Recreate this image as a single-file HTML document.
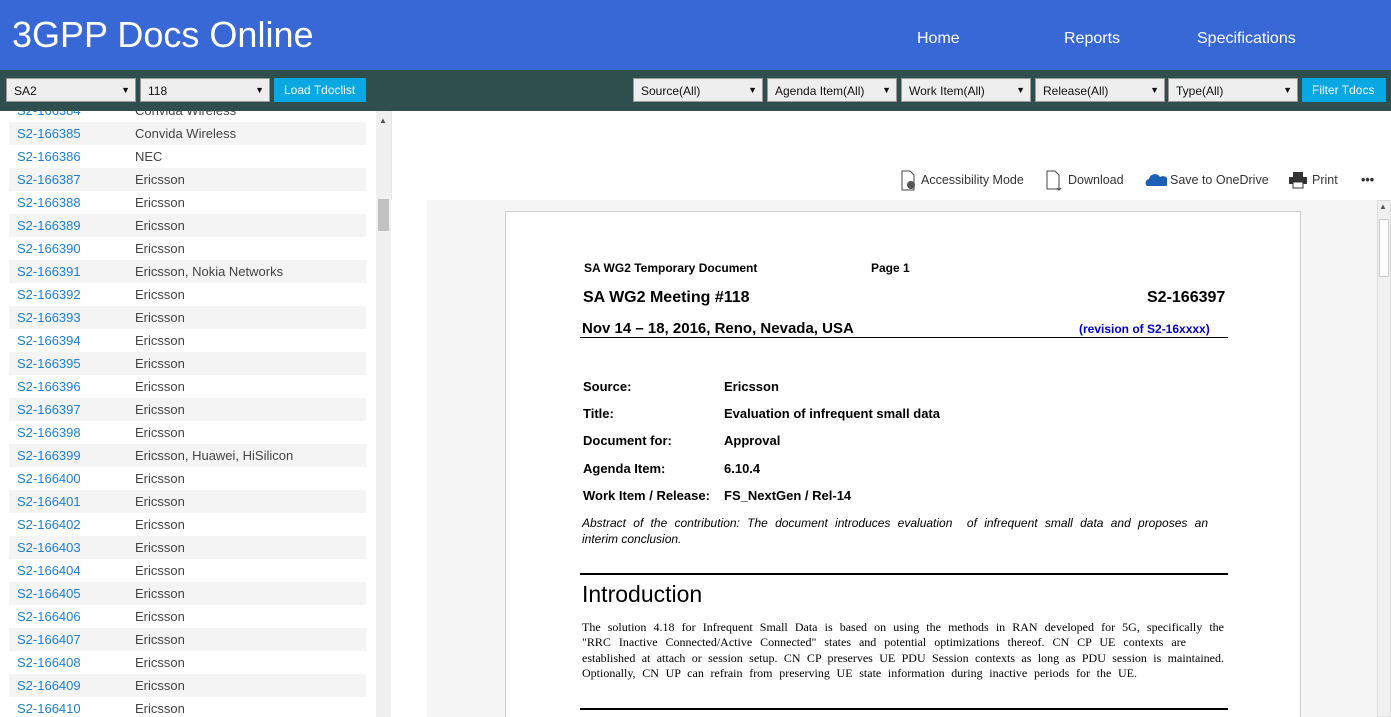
<!DOCTYPE html><html><head><style>
*{margin:0;padding:0;box-sizing:border-box}
html,body{width:1391px;height:717px;overflow:hidden}
body{font-family:"Liberation Sans",sans-serif;background:#fff;position:relative}
.hd{position:absolute;left:0;top:0;width:1391px;height:70px;background:#3867d6}
.hd h1{position:absolute;left:12px;top:14px;font-weight:normal;font-size:36px;color:#fff}
.nav{position:absolute;top:30px;color:#fff;font-size:16px}
.tb{position:absolute;left:0;top:70px;width:1391px;height:41px;background:#2f4f4f}
.sel{position:absolute;top:8px;height:24px;background:#eee;border:1px solid #999;font-size:12px;padding:5px 7px;color:#111}
.sel:after{content:"▼";position:absolute;right:5px;top:6px;font-size:9px}
.btn{position:absolute;top:8px;height:24px;background:#09a8e3;color:#fff;font-size:12px;padding:5px 10px}
.list{position:absolute;left:0;top:111px;width:376px;height:606px;overflow:hidden}
.row{position:absolute;left:9px;width:357px;height:23px;font-size:13px;line-height:23px}
.row .a{position:absolute;left:8px;color:#1a7fd6}.row .b{position:absolute;left:126px;color:#444}
.g{background:#f4f4f4}
.sb{position:absolute;left:376px;top:111px;width:15px;height:606px;background:#f0f0f0}
.doc{position:absolute;left:427px;top:200px;width:950px;height:517px;background:#f5f5f5}
.page{position:absolute;left:505px;top:211px;width:796px;height:506px;background:#fff;border:1px solid #ccc;border-bottom:none}
.t{position:absolute;font-size:13px;color:#000;white-space:nowrap}
.tl{position:absolute;top:173px;font-size:12.5px;color:#333}
.pl{position:absolute;left:582px;width:642px;font-family:'Liberation Serif',serif;font-size:12px;white-space:nowrap;text-align:justify;text-align-last:justify}
</style></head><body>
<div class="hd"><h1>3GPP Docs Online</h1><span class="nav" style="left:917px">Home</span><span class="nav" style="left:1064px">Reports</span><span class="nav" style="left:1197px">Specifications</span></div>
<div class="tb">
<div class="sel" style="left:6px;width:130px">SA2</div><div class="sel" style="left:140px;width:130px">118</div><div class="btn" style="left:274px;width:92px">Load Tdoclist</div>
<div class="sel" style="left:633px;width:130px">Source(All)</div><div class="sel" style="left:767px;width:130px">Agenda Item(All)</div><div class="sel" style="left:901px;width:130px">Work Item(All)</div><div class="sel" style="left:1035px;width:130px">Release(All)</div><div class="sel" style="left:1168px;width:130px">Type(All)</div><div class="btn" style="left:1302px;width:84px">Filter Tdocs</div>
</div>
<div class="list">
<div class="row" style="top:-12px"><span class="a">S2-166384</span><span class="b">Convida Wireless</span></div>
<div class="row g" style="top:11px"><span class="a">S2-166385</span><span class="b">Convida Wireless</span></div>
<div class="row" style="top:34px"><span class="a">S2-166386</span><span class="b">NEC</span></div>
<div class="row g" style="top:57px"><span class="a">S2-166387</span><span class="b">Ericsson</span></div>
<div class="row" style="top:80px"><span class="a">S2-166388</span><span class="b">Ericsson</span></div>
<div class="row g" style="top:103px"><span class="a">S2-166389</span><span class="b">Ericsson</span></div>
<div class="row" style="top:126px"><span class="a">S2-166390</span><span class="b">Ericsson</span></div>
<div class="row g" style="top:149px"><span class="a">S2-166391</span><span class="b">Ericsson, Nokia Networks</span></div>
<div class="row" style="top:172px"><span class="a">S2-166392</span><span class="b">Ericsson</span></div>
<div class="row g" style="top:195px"><span class="a">S2-166393</span><span class="b">Ericsson</span></div>
<div class="row" style="top:218px"><span class="a">S2-166394</span><span class="b">Ericsson</span></div>
<div class="row g" style="top:241px"><span class="a">S2-166395</span><span class="b">Ericsson</span></div>
<div class="row" style="top:264px"><span class="a">S2-166396</span><span class="b">Ericsson</span></div>
<div class="row g" style="top:287px"><span class="a">S2-166397</span><span class="b">Ericsson</span></div>
<div class="row" style="top:310px"><span class="a">S2-166398</span><span class="b">Ericsson</span></div>
<div class="row g" style="top:333px"><span class="a">S2-166399</span><span class="b">Ericsson, Huawei, HiSilicon</span></div>
<div class="row" style="top:356px"><span class="a">S2-166400</span><span class="b">Ericsson</span></div>
<div class="row g" style="top:379px"><span class="a">S2-166401</span><span class="b">Ericsson</span></div>
<div class="row" style="top:402px"><span class="a">S2-166402</span><span class="b">Ericsson</span></div>
<div class="row g" style="top:425px"><span class="a">S2-166403</span><span class="b">Ericsson</span></div>
<div class="row" style="top:448px"><span class="a">S2-166404</span><span class="b">Ericsson</span></div>
<div class="row g" style="top:471px"><span class="a">S2-166405</span><span class="b">Ericsson</span></div>
<div class="row" style="top:494px"><span class="a">S2-166406</span><span class="b">Ericsson</span></div>
<div class="row g" style="top:517px"><span class="a">S2-166407</span><span class="b">Ericsson</span></div>
<div class="row" style="top:540px"><span class="a">S2-166408</span><span class="b">Ericsson</span></div>
<div class="row g" style="top:563px"><span class="a">S2-166409</span><span class="b">Ericsson</span></div>
<div class="row" style="top:586px"><span class="a">S2-166410</span><span class="b">Ericsson</span></div>
</div>
<div class="sb"><div style="position:absolute;left:3px;top:5px;font-size:8px;color:#555">▲</div><div style="position:absolute;left:2px;top:88px;width:11px;height:32px;background:#c1c1c1"></div></div>
<div style="position:absolute;left:391px;top:111px;width:1000px;height:89px;background:#fff;border-left:1px solid #e5e5e5"></div>
<svg style="position:absolute;left:900px;top:170px" width="18" height="22" viewBox="0 0 18 22"><path d="M2 1h8l4 4v15H2z" fill="none" stroke="#444"/><circle cx="11" cy="15" r="4" fill="#555"/></svg>
<div class="tl" style="left:921px">Accessibility Mode</div>
<svg style="position:absolute;left:1046px;top:170px" width="18" height="22" viewBox="0 0 18 22"><path d="M1 1h8l4 4v14H1z" fill="none" stroke="#444"/><path d="M13 13v7M11 18l2 2 2-2" fill="none" stroke="#444"/></svg>
<div class="tl" style="left:1068px">Download</div>
<svg style="position:absolute;left:1145px;top:172px" width="22" height="16" viewBox="0 0 22 16"><path d="M2 14a4 4 0 0 1 2-7a6 6 0 0 1 11-2a5 5 0 0 1 6 9z" fill="#1c5fb8"/></svg>
<div class="tl" style="left:1170px">Save to OneDrive</div>
<svg style="position:absolute;left:1288px;top:171px" width="20" height="18" viewBox="0 0 20 18"><rect x="5" y="1" width="10" height="5" fill="#333"/><rect x="1" y="6" width="18" height="7" fill="#333"/><rect x="5" y="11" width="10" height="6" fill="#fff" stroke="#333"/></svg>
<div class="tl" style="left:1312px">Print</div>
<div class="tl" style="left:1361px;font-weight:bold">•••</div>
<div class="doc"></div>
<div style="position:absolute;left:1377px;top:200px;width:14px;height:517px;background:#f0f0f0;border:1px solid #ddd"><div style="position:absolute;left:1px;top:1px;font-size:8px;color:#555">▲</div><div style="position:absolute;left:1px;top:18px;width:10px;height:58px;background:#fff;border:1px solid #ccc"></div></div>
<div class="page"></div>
<div class="t" style="left:584px;top:261px;font-size:12px;font-weight:bold">SA WG2 Temporary Document</div>
<div class="t" style="left:871px;top:261px;font-size:12px;font-weight:bold">Page 1</div>
<div class="t" style="left:583px;top:289px;font-size:16px;font-weight:bold">SA WG2 Meeting #118</div>
<div class="t" style="left:1147px;top:289px;font-size:16px;font-weight:bold">S2-166397</div>
<div class="t" style="left:582px;top:320px;font-size:15px;font-weight:bold">Nov 14 – 18, 2016, Reno, Nevada, USA</div>
<div class="t" style="left:1079px;top:322px;font-size:12px;font-weight:bold;color:#00c">(revision of S2-16xxxx)</div>
<div style="position:absolute;left:580px;top:337px;width:648px;height:1px;background:#000"></div>
<div class="t" style="left:583px;top:379px;font-weight:bold">Source:</div><div class="t" style="left:724px;top:379px;font-weight:bold">Ericsson</div>
<div class="t" style="left:583px;top:406px;font-weight:bold">Title:</div><div class="t" style="left:724px;top:406px;font-weight:bold">Evaluation of infrequent small data</div>
<div class="t" style="left:583px;top:433px;font-weight:bold">Document for:</div><div class="t" style="left:724px;top:433px;font-weight:bold">Approval</div>
<div class="t" style="left:583px;top:461px;font-weight:bold">Agenda Item:</div><div class="t" style="left:724px;top:461px;font-weight:bold">6.10.4</div>
<div class="t" style="left:583px;top:488px;font-weight:bold">Work Item / Release:</div><div class="t" style="left:724px;top:488px;font-weight:bold">FS_NextGen / Rel-14</div>
<div class="t" style="left:582px;top:516px;width:626px;font-size:12px;font-style:italic;white-space:normal;text-align:justify;text-align-last:justify">Abstract of the contribution: The document introduces evaluation &nbsp;of infrequent small data and proposes an</div>
<div class="t" style="left:582px;top:532px;font-size:12px;font-style:italic">interim conclusion.</div>
<div style="position:absolute;left:580px;top:573px;width:648px;height:2px;background:#000"></div>
<div class="t" style="left:582px;top:581px;font-size:23px">Introduction</div>
<div class="pl" style="top:620px">The solution 4.18 for Infrequent Small Data is based on using the methods in RAN developed for 5G, specifically the</div>
<div class="pl" style="top:635px;width:604px">"RRC Inactive Connected/Active Connected" states and potential optimizations thereof. CN CP UE contexts are</div>
<div class="pl" style="top:651px">established at attach or session setup. CN CP preserves UE PDU Session contexts as long as PDU session is maintained.</div>
<div class="pl" style="top:666px;width:555px">Optionally, CN UP can refrain from preserving UE state information during inactive periods for the UE.</div>
<div style="position:absolute;left:580px;top:708px;width:648px;height:2px;background:#000"></div>
</body></html>
